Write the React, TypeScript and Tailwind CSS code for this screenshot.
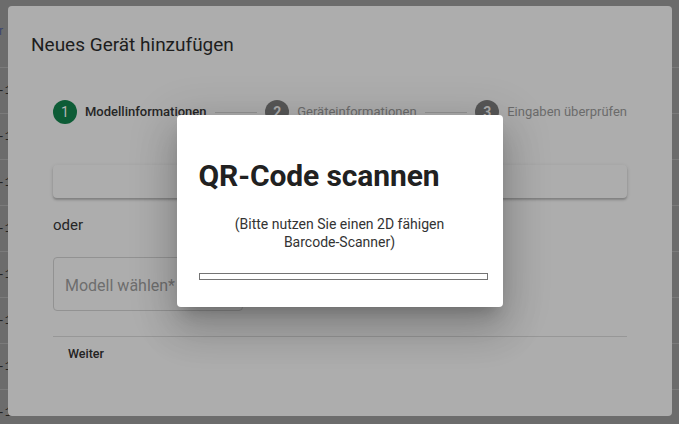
import React from "react";

const rows = [0, 1, 2, 3, 4, 5, 6, 7];

function Step({ n, label, active }: { n: number; label: string; active?: boolean }) {
  return (
    <div className="flex items-center gap-2 shrink-0">
      <div
        className={
          active
            ? "w-6 h-6 rounded-full bg-[#0d5c36] text-[#b5b5b5] flex items-center justify-center text-[14px]"
            : "w-6 h-6 rounded-full bg-[#575757] text-[#acacac] flex items-center justify-center text-[14px] font-bold"
        }
      >
        {n}
      </div>
      <span className={active ? "text-[13px] text-[#262626] font-medium" : "text-[13px] text-[#6b6b6b]"}>{label}</span>
    </div>
  );
}

export default function App() {
  return (
    <div className="relative w-[679px] h-[424px] overflow-hidden bg-[#6c6c6c]" style={{ fontFamily: "Roboto, 'Noto Sans', sans-serif" }}>
      {/* background page */}
      <div className="flex flex-col">
        <div className="h-[67px] flex items-center">
          <span className="text-[12px] text-[#3d4670] ml-[-1px] mt-[-6px]">r</span>
        </div>
        {rows.map((r) => (
          <div key={r} className="h-[46px] border-t border-[#7b7b7b] flex items-center">
            <span className="w-[185px] text-[13px] text-[#222] ml-[-3px]" style={{ fontFamily: "'Liberation Mono', monospace" }}>
              -1
            </span>
            <span className="w-[265px] text-[13px] text-[#222]" style={{ fontFamily: "'Liberation Mono', monospace" }}>
              2019-01-15 12:00
            </span>
            <span className="text-[13px] text-[#222]" style={{ fontFamily: "'Liberation Mono', monospace" }}>
              FRX8D0C3-07-AB
            </span>
          </div>
        ))}
      </div>

      {/* outer dialog */}
      <div className="absolute left-[8px] top-[6px] w-[664px] h-[410px] bg-[#adadad] rounded-[4px] flex flex-col">
        <div className="pl-[23px] pt-[27px] text-[19px] text-[#1d1d1d] leading-[24px]">Neues Gerät hinzufügen</div>
        <div className="mx-[45px] mt-[43px] flex items-center">
          <Step n={1} label="Modellinformationen" active />
          <div className="flex-1 h-px bg-[#939393] mx-2" />
          <Step n={2} label="Geräteinformationen" />
          <div className="flex-1 h-px bg-[#939393] mx-2" />
          <Step n={3} label="Eingaben überprüfen" />
        </div>
        <div className="mx-[45px] mt-[41px] h-[33px] rounded-[4px] bg-[#adadad] shadow-[0_2px_2px_rgba(0,0,0,0.2),0_1px_4px_rgba(0,0,0,0.1)]" />
        <div className="ml-[45px] mt-[17px] text-[15px] text-[#262626] leading-[20px]">oder</div>
        <div className="ml-[45px] mt-[22px] w-[190px] h-[54px] rounded-[4px] border border-[#929292] flex items-center pl-[11px] pt-[3px]">
          <span className="text-[16px] text-[#6e6e6e]">Modell wählen*</span>
        </div>
        <div className="mx-[45px] mt-[25px] h-px bg-[#979797]" />
        <div className="ml-[60px] mt-[8px] text-[12.5px] font-medium text-[#232323]">Weiter</div>
      </div>

      {/* inner dialog */}
      <div className="absolute inset-0 flex items-center justify-center">
        <div className="w-[326px] h-[192px] mt-[-2px] bg-white rounded-[4px] shadow-[0_11px_15px_-7px_rgba(0,0,0,0.2),0_24px_38px_3px_rgba(0,0,0,0.14),0_9px_46px_8px_rgba(0,0,0,0.12)] flex flex-col pl-[22px] pr-[15px]">
          <div className="mt-[44px] text-[30px] font-bold text-[#212121] leading-[34px] tracking-[-0.1px]">QR-Code scannen</div>
          <div className="mt-[22px] text-center text-[14px] text-[#333] leading-[18px] pr-[7px]">
            (Bitte nutzen Sie einen 2D fähigen
            <br />
            Barcode-Scanner)
          </div>
          <div className="mt-[22px] h-[7px] border-[1.5px] border-[#747474] bg-white" />
        </div>
      </div>
    </div>
  );
}
